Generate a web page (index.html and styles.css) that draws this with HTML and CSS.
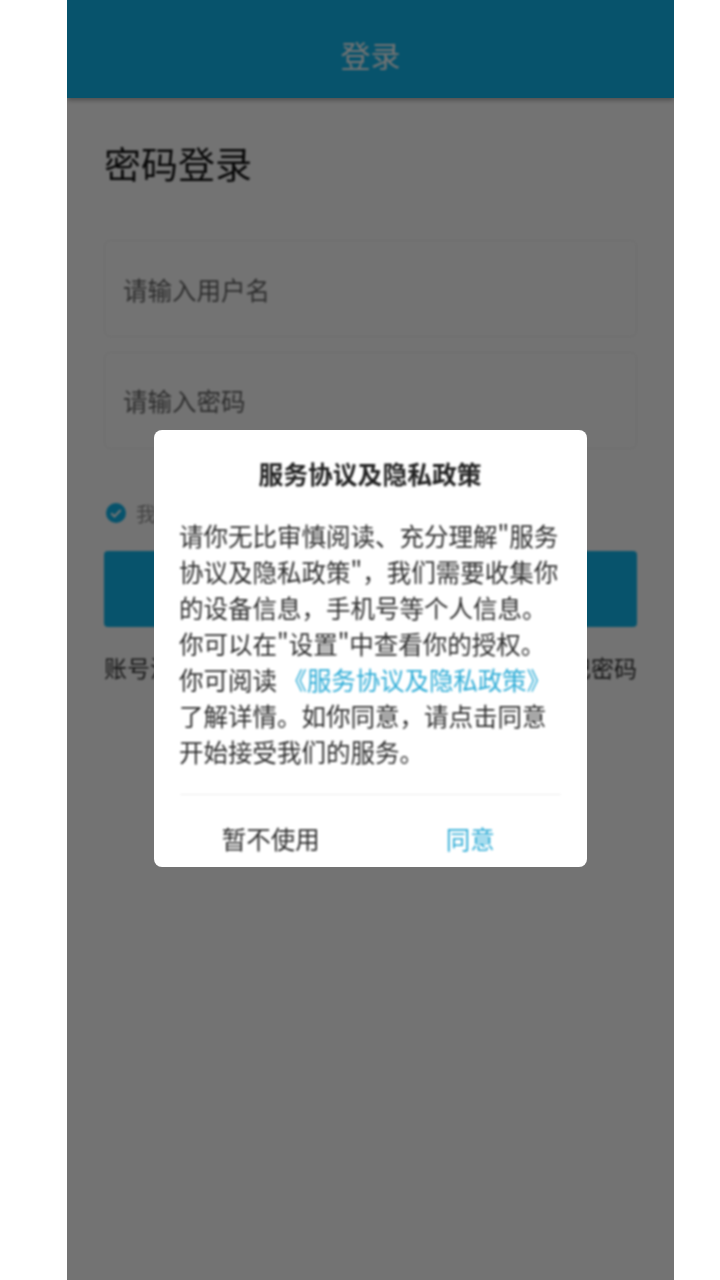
FILE: index.html
```html
<!DOCTYPE html>
<html lang="zh-CN">
<head>
<meta charset="utf-8">
<title>登录</title>
<link rel="stylesheet" href="styles.css">
</head>
<body>
<div class="phone">
  <header class="topbar"><span class="soft">登录</span></header>
  <main class="content soft">
    <h1 class="heading">密码登录</h1>
    <div class="field field-first">请输入用户名</div>
    <div class="field field-second">请输入密码</div>
    <div class="agree">
      <svg class="check" viewBox="0 0 20 20" aria-hidden="true"><circle cx="10" cy="10" r="10"/><path d="M5.2 10.2l3.3 3.3 6.2-6.4"/></svg>
      <span>我已阅读并同意</span>
    </div>
    <div class="submit"></div>
    <div class="links"><span>账号注册</span><span>忘记密码</span></div>
  </main>
  <div class="overlay">
    <section class="dialog">
      <div class="soft">
        <h2 class="dialog-title">服务协议及隐私政策</h2>
        <p class="dialog-text">请你无比审慎阅读、充分理解"服务<br>协议及隐私政策"，我们需要收集你<br>的设备信息，手机号等个人信息。<br>你可以在"设置"中查看你的授权。<br>你可阅读 <a class="dialog-link">《服务协议及隐私政策》</a><br>了解详情。如你同意，请点击同意<br>开始接受我们的服务。</p>
        <div class="dialog-actions">
          <span class="action action-no">暂不使用</span>
          <span class="action action-ok">同意</span>
        </div>
      </div>
    </section>
  </div>
</div>
</body>
</html>
```
FILE: styles.css
```css
* { box-sizing: border-box; }
html, body { margin: 0; height: 100%; background: #fff; }
body { font-family: "Noto Sans CJK SC", "Liberation Sans", sans-serif; }
.soft { filter: blur(0.8px); }
.phone {
  position: relative;
  width: 607px;
  height: 1280px;
  margin-left: 67px;
  overflow: hidden;
  background: #fff;
}
.topbar {
  height: 98px;
  display: flex;
  align-items: center;
  justify-content: center;
  padding-top: 10px;
  background: #10b8ef;
  color: #fff;
  font-size: 30px;
  box-shadow: 0 2px 5px rgba(0,0,0,.35);
}
.content { padding: 40px 37px 0; color: #111; }
.heading { margin: 0 0 52px; font-size: 37px; line-height: 50px; font-weight: 400; }
.field {
  height: 97px;
  padding-left: 18px;
  display: flex;
  align-items: center;
  border: 1px solid #f0f0f0;
  border-radius: 6px;
  background: #fff;
  color: #666;
  font-size: 24.5px;
}
.field-first { padding-top: 2px; }
.field-second { margin-top: 15px; }
.agree {
  display: flex;
  align-items: center;
  gap: 10px;
  margin-top: 54px;
  margin-left: 2px;
  height: 20px;
  color: #999;
  font-size: 20px;
}
.check { width: 20px; height: 20px; flex: none; }
.check circle { fill: #10b8ef; }
.check path { fill: none; stroke: #fff; stroke-width: 2.2; }
.submit {
  height: 76px;
  margin-top: 28px;
  border-radius: 4px;
  background: #10b8ef;
}
.links {
  display: flex;
  justify-content: space-between;
  margin-top: 24px;
  color: #333;
  font-size: 23px;
  line-height: 32px;
}
.overlay {
  position: absolute;
  inset: 0;
  background: rgba(0,0,0,.55);
}
.dialog {
  position: absolute;
  left: 87px;
  top: 430px;
  width: 433px;
  height: 437px;
  padding: 0 26px 0 25px;
  border-radius: 8px;
  background: #fff;
  color: #2e2e2e;
}
.dialog-title {
  margin: 0;
  padding-top: 25px;
  text-align: center;
  font-size: 24.8px;
  line-height: 36px;
  font-weight: 700;
  color: #222;
}
.dialog-text {
  margin: 27px 0 0;
  font-size: 24.5px;
  line-height: 36px;
  white-space: nowrap;
}
.dialog-link { color: #2eacd6; letter-spacing: -0.1px; }
.dialog-actions {
  display: flex;
  margin-top: 24px;
  margin-left: 1px;
  border-top: 1px solid #eee;
  padding-top: 26px;
}
.action {
  flex: 1;
  text-align: center;
  font-size: 24.5px;
  line-height: 36px;
}
.action-no { padding-right: 10px; }
.action-ok { padding-left: 8px; color: #2eacd6; }
```
